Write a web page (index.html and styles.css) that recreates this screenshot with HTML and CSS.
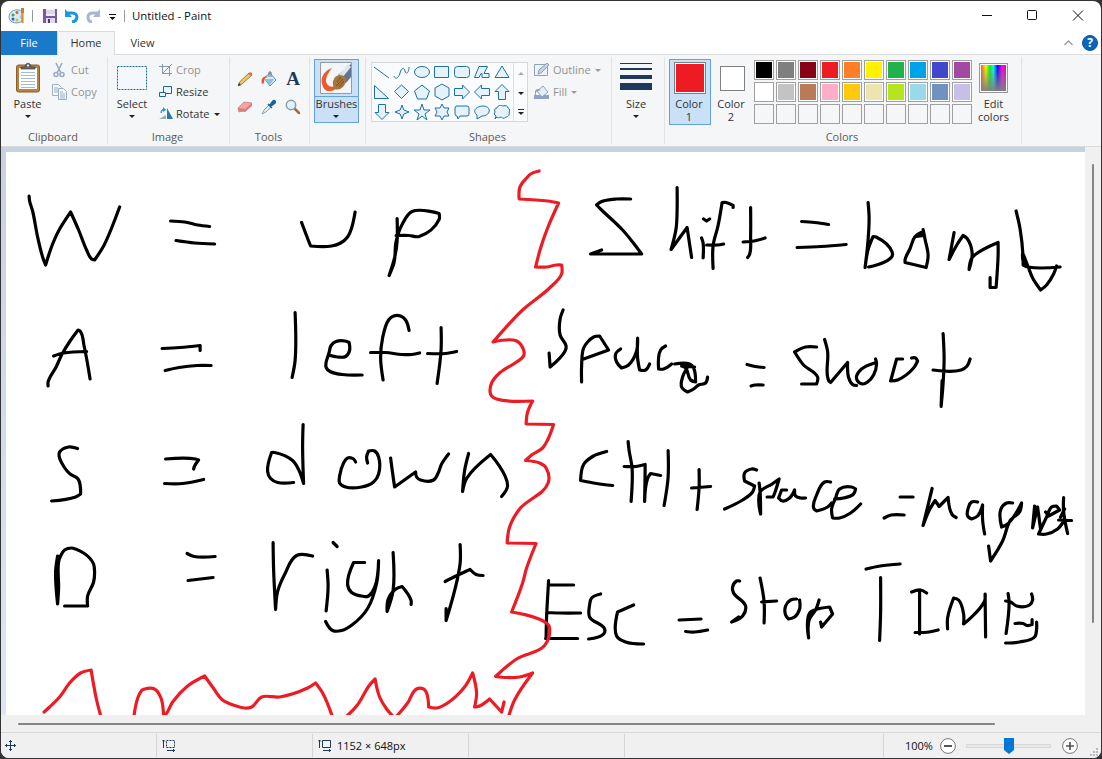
FILE: index.html
```
<!DOCTYPE html>
<html lang="en">
<head>
<meta charset="utf-8">
<title>Untitled - Paint</title>
<link rel="stylesheet" href="styles.css">
</head>
<body>
<div class="window">
  <header class="titlebar">
    <svg class="app-icon" width="18" height="18" viewBox="0 0 18 18"><path d="M1 10C1 5 6 2 11 3c4 1 4 4 2 6-1 2 2 3 1 5-2 3-13 3-13-4z" fill="#d6eaf7" stroke="#5f9fc8"/><circle cx="5" cy="8" r="1.5" fill="#3cab45"/><circle cx="9" cy="5.500" r="1.500" fill="#e4572c"/><circle cx="5" cy="12" r="1.500" fill="#2a62bd"/><circle cx="9" cy="13" r="1.500" fill="#e8b820"/><path d="M14.500 6v10" stroke="#e58a2e" stroke-width="2.200"/><path d="M13 6V1l3 0v5z" fill="#ce7a35"/></svg>
    <i class="bar"></i>
    <svg class="save" width="14" height="14" viewBox="0 0 14 14"><path d="M0 0h14v14H0z" fill="#7759a7"/><path d="M3 0h9v7H3z" fill="#f1edf8"/><path d="M3 2h9M3 4h9" stroke="#c9bddf"/><path d="M3 9h9v5H3z" fill="#dcdce9"/><path d="M5 10h2v4H5z" fill="#50347f"/></svg>
    <svg class="undo" width="14" height="14" viewBox="0 0 14 14"><path d="M2 4h5c7 0 6 8 0 9" fill="none" stroke="#1598df" stroke-width="3"/><path d="M0 0v8h7z" fill="#1598df"/></svg>
    <svg class="redo" width="14" height="14" viewBox="0 0 14 14"><path d="M12 4H7C0 4 1 12 6 13" fill="none" stroke="#a9b7c8" stroke-width="3"/><path d="M14 0v8H7z" fill="#a9b7c8"/></svg>
    <svg class="custom" width="7" height="6" viewBox="0 0 7 6"><path d="M0 .5h7" stroke="#111"/><path d="M.5 3h6l-3 3z" fill="#111"/></svg>
    <i class="bar"></i>
    <span class="title">Untitled - Paint</span>
    <svg class="controls" width="104" height="12" viewBox="0 0 104 12" fill="none" stroke="#111"><path d="M0 5.500h10" /><rect x="45.500" y=".5" width="9" height="9" rx="1"/><path d="m91 .5 10 10m0-10-10 10"/></svg>
  </header>
  <nav class="tabs">
    <span class="tab file">File</span><span class="tab home">Home</span><span class="tab view">View</span>
    <svg class="collapse" width="9" height="6" viewBox="0 0 9 6"><path d="m.5 5 4-4 4 4" fill="none" stroke="#999" stroke-width="1.300"/></svg>
    <span class="help">?</span>
  </nav>

  <section class="ribbon">
    <div class="group clipboard">
      <div class="body">
        <div class="big paste">
          <svg width="26" height="33" viewBox="0 0 26 33"><rect x="1.500" y="3" width="23" height="27" rx="2" fill="#b88342" stroke="#8d5d28"/><path d="M4 6h18v21H4z" fill="#fff"/><path d="M6 10.500h14M6 13.500h14M6 16.500h14M6 19.500h14M6 22.500h14M6 25.500h14" stroke="#9fbbd6"/><path d="M6 7V5h4c0-5 6-5 6 0h4v2z" fill="#666" stroke="#444" stroke-width=".7"/><circle cx="13" cy="3.500" r="1" fill="#fff"/></svg>
          <span>Paste</span><i class="arrow"></i>
        </div>
        <div class="rows disabled">
          <div class="row"><svg width="16" height="16" viewBox="0 0 16 16" fill="none" stroke="#9aabc0" stroke-width="1.600"><path d="m4 1 5 10M10 1 5 11"/><circle cx="4" cy="12.500" r="2"/><circle cx="10" cy="12.500" r="2"/></svg>Cut</div>
          <div class="row"><svg width="16" height="16" viewBox="0 0 16 16" fill="#f4f7fb" stroke="#9fb0c5"><path d="M.5.5h6l3 3v8h-9z"/><path d="M2 4h4M2 6h4M2 8h4"/><path d="M6.500 4.500h5l3 3v8h-8z"/><path d="M8 8h3M8 10h5M8 12h5M8 14h5"/></svg>Copy</div>
        </div>
      </div>
      <h2>Clipboard</h2>
    </div>

    <div class="group image">
      <div class="body">
        <div class="big select">
          <svg width="30" height="33" viewBox="0 0 30 33"><rect x=".5" y="4.500" width="29" height="23" fill="#f4f8fc" stroke="#1e6fae" stroke-dasharray="2 1"/></svg>
          <span>Select</span><i class="arrow"></i>
        </div>
        <div class="rows">
          <div class="row off"><svg width="14" height="16" viewBox="0 0 14 16" fill="none" stroke="#8496ae"><path d="M3.500 2v9.500H13M0 4.500h10.500V14M3 12 13 2"/></svg>Crop</div>
          <div class="row"><svg width="14" height="16" viewBox="0 0 14 16" fill="#eaf6fc" stroke="#1c669f"><path d="M4.500 2.500h8v7h-8z"/><path d="M.5 8.500h6v4h-6z"/></svg>Resize</div>
          <div class="row"><svg width="14" height="16" viewBox="0 0 14 16"><path d="M8 2v11h6z" fill="#2479b6"/><path d="M7 9v4H0z" fill="#aaa"/><path d="M2 7c0-4 4-4 4-3" fill="none" stroke="#2b91dd" stroke-width="1.300"/><path d="m4 1 3 3-3 2z" fill="#2b91dd"/></svg>Rotate<i class="arrow side"></i></div>
        </div>
      </div>
      <h2>Image</h2>
    </div>

    <div class="group tools">
      <div class="body tool-grid">
        <svg viewBox="0 0 16 16"><path d="m1 15 1.500-4L12 2l3 2-10 9z" fill="#f0c65a" stroke="#8d6c2c" stroke-width=".8"/><path d="m1 15 1-3 2 2z" fill="#333"/><path d="m11 3 2-2 2 1v2l-1 1z" fill="#d8705c"/></svg>
        <svg viewBox="0 0 16 16"><path d="m3 7 6-5 6 7-6 6z" fill="#d8ebf8" stroke="#5d8fb5"/><path d="m4 8 9 0-4 6z" fill="#8dbfe0"/><path d="M1 13C-1 7 3 4 8 6 4 6 3 8 3 12z" fill="#e5542b"/><path d="M8 6V1h2v5" fill="none" stroke="#65778a"/></svg>
        <span class="letter">A</span>
        <svg viewBox="0 0 16 16"><path d="m1 9 6-6 8 1-6 7-7 2z" fill="#f2a5a2" stroke="#c46d70" stroke-width=".7"/><path d="m1 9 7 1 7-6v3l-7 6-6-1z" fill="#dd7b7c"/></svg>
        <svg viewBox="0 0 16 16"><path d="m1 15 2-4 5-5 2 2-5 5z" fill="#dbeef8" stroke="#718da5" stroke-width=".8"/><path d="m7 5 4 4M9 6l3-4c1-1 3 0 2 2l-4 3z" fill="#1862a4" stroke="#1862a4" stroke-width="1.600"/></svg>
        <svg viewBox="0 0 16 16"><path d="m9 9 5 5" stroke="#a76b38" stroke-width="2.500" stroke-linecap="round"/><circle cx="6" cy="6" r="4.700" fill="#dff1fc" stroke="#8b9aa8" stroke-width="1.500"/></svg>
      </div>
      <h2>Tools</h2>
    </div>

    <div class="group brushes">
      <div class="brush-button">
        <svg width="32" height="32" viewBox="0 0 32 32"><path d="M.5.5h31v31H.5z" fill="#f2f6f8" stroke="#949a9f"/><path d="M12 6C4 9-1 16 3 25c3 6 9 5 14 1l-2-2c-5 2-9-1-9-6 0-4 3-8 6-12z" fill="#ed5928"/><path d="M31 2v13l-5 6-8-8z" fill="#61748b"/><path d="m28 2-9 11 3 3 9-11z" fill="#dce6ef"/><path d="M20 13c5 0 8 4 5 9-3 6-8 6-12 5 2-3-2-5 1-10 1-3 4-4 6-4z" fill="#a8743e"/><path d="m17 20 4-5m-5 9 7-7m-4 8 5-6" stroke="#6c451f" stroke-width=".8"/></svg>
        <div>Brushes<i class="arrow"></i></div>
      </div>
    </div>

    <div class="group shapes">
      <div class="body">
        <div class="gallery">
          <div class="shape-grid">
            <svg viewBox="0 0 20 20"><path d="m2 5 15 11"/></svg>
            <svg viewBox="0 0 20 20"><path d="M2 14c1 4 5 2 6-3s4-6 5-2 4 2 4-4" fill="none"/></svg>
            <svg viewBox="0 0 20 20"><ellipse cx="10" cy="10" rx="7.500" ry="5.500"/></svg>
            <svg viewBox="0 0 20 20"><path d="M2.500 4.500h14v11h-14z"/></svg>
            <svg viewBox="0 0 20 20"><rect x="2.500" y="4.500" width="15" height="11" rx="3"/></svg>
            <svg viewBox="0 0 20 20"><path d="M2.500 15.500 7 4.500h8.500l-3.500 7h5l0 4h-7v-4H9l-2 4z"/></svg>
            <svg viewBox="0 0 20 20"><path d="m10 4 7 11.500H3z"/></svg>
            <svg viewBox="0 0 20 20"><path d="M2.500 3.500v13h14z"/></svg>
            <svg viewBox="0 0 20 20"><path d="m9.500 3 7 6.500-7 7-7-7z"/></svg>
            <svg viewBox="0 0 20 20"><path d="m10 3 7.500 6-3 8h-9l-3-8z"/></svg>
            <svg viewBox="0 0 20 20"><path d="m10 2 7 4v8l-7 4-7-4V6z"/></svg>
            <svg viewBox="0 0 20 20"><path d="M2.500 6.500h8V3l7 7-7 7v-3.500h-8z"/></svg>
            <svg viewBox="0 0 20 20"><path d="M17.500 6.500h-8V3l-7 7 7 7v-3.500h8z"/></svg>
            <svg viewBox="0 0 20 20"><path d="M6.500 17.500v-8H3l7-7 7 7h-3.500v8z"/></svg>
            <svg viewBox="0 0 20 20"><path d="M6.500 2.500v8H3l7 7 7-7h-3.500v-8z"/></svg>
            <svg viewBox="0 0 20 20"><path d="m10 3 1.800 5L17 10l-5.200 2-1.800 5-1.800-5L3 10l5.200-2z"/></svg>
            <svg viewBox="0 0 20 20"><path d="m10 2 2 6h6l-5 4 2 6-5-4-5 4 2-6-5-4h6z"/></svg>
            <svg viewBox="0 0 20 20"><path d="m10 2 2 4h5l-2 4 2 4h-5l-2 4-2-4H3l2-4-2-4h5z"/></svg>
            <svg viewBox="0 0 20 20"><path d="M5 4h10q2 0 2 2v6q0 2-2 2H8l-2 3-1-3q-2 0-2-2V6q0-2 2-2z"/></svg>
            <svg viewBox="0 0 20 20"><path d="M5 13C-1 8 6 4 11 4c9 0 8 10-1 10l-5 3z"/></svg>
            <svg viewBox="0 0 20 20"><path d="M4 14c-2-1-2-3-1-4-1-3 0-4 2-4 1-3 4-3 6-2 3-1 5 0 5 2 2 1 2 3 1 4 1 3-1 5-3 5-2 2-4 1-5 0-2 1-3 1-4 0l-2 2z"/></svg>
          </div>
          <div class="spin"><span><i class="arrow up"></i></span><span><i class="arrow"></i></span><span><i class="arrow more"></i></span></div>
        </div>
        <div class="rows disabled fills">
          <div class="row"><svg width="17" height="16" viewBox="0 0 17 16" fill="#edf2f8" stroke="#8ea2bd"><path d="M1.500 2.500h13v11h-13z"/><path d="m5 12 1-4 8-7 2 2-8 8z" fill="#c5d3e4"/></svg>Outline<i class="arrow side"></i></div>
          <div class="row"><svg width="17" height="16" viewBox="0 0 17 16"><path d="M1 11h15v4H1z" fill="#8ea4c2"/><path d="m4 7 6-5 5 6-6 5z" fill="#e5edf6" stroke="#8ea4c2"/><path d="M2 11V7c1-2 3-3 6-1L3 8v3z" fill="#8ea4c2"/></svg>Fill<i class="arrow side"></i></div>
        </div>
      </div>
      <h2>Shapes</h2>
    </div>

    <div class="group size">
      <div class="big">
        <svg width="32" height="33" viewBox="0 0 32 33" fill="#1e395b"><path d="M0 1h32v1H0zM0 6h32v2H0zM0 13h32v4H0zM0 21h32v7H0z"/></svg>
        <span>Size</span><i class="arrow"></i>
      </div>
    </div>

    <div class="group colors">
      <div class="body">
        <div class="color-button active"><i class="current red"></i><span>Color<br>1</span></div>
        <div class="color-button second"><i class="current white"></i><span>Color<br>2</span></div>
        <div class="palette">
          <i class="c1"></i><i class="c2"></i><i class="c3"></i><i class="c4"></i><i class="c5"></i><i class="c6"></i><i class="c7"></i><i class="c8"></i><i class="c9"></i><i class="c10"></i>
          <i class="c11"></i><i class="c12"></i><i class="c13"></i><i class="c14"></i><i class="c15"></i><i class="c16"></i><i class="c17"></i><i class="c18"></i><i class="c19"></i><i class="c20"></i>
          <i></i><i></i><i></i><i></i><i></i><i></i><i></i><i></i><i></i><i></i>
        </div>
        <div class="edit"><i class="spectrum"></i><span>Edit<br>colors</span></div>
      </div>
      <h2>Colors</h2>
    </div>
  </section>

  <main class="workspace">
    <div class="canvas-area">
      <svg class="canvas" width="1079" height="563" viewBox="6.4 152 1079 563">
        <g class="ink">
          <path d="M29.500 196 30 201 33 211 38 237 43 257 46 265 53 244 60 229 71 212 79 230 87 250 92 259 95 260 104 246 112 228 120 207M171 221l14 1 13 3 12 1.500M176.500 240.500 195 243l20 1"/>
          <path d="M48.500 386v-4l8-15 6-13 8-13 8-11 2 1 4 15 6 33M54 356l10-3 23-1.500M162.500 348.500l18-1 20-2v5M165.500 370.500l14-3 18-2h14"/>
          <path d="M302 222.500 309 241l2 5h21l9-3 7-6 4-9 3.500-16M397.500 218.500v23l-2 14-6 20 5-13 2-21 6-17 10-13 27 2v6l-20 17-10-1h-13"/>
          <path d="M295.500 312.500v48l-3 17M329 355l9 2 8-.5 4-6-.5-8-4-1.500-9 .5-5 4-2 7-3 15 4 4 12 3 20 .5M409.500 330.500 406 320l-5-4h-7l-5 4-6 18-2 20 2.500 22M371 352.500h15l16 2h10l8-1.500M441.500 327.500v22l-4 34M428 353.500h18l11-2"/>
          <path d="M78 448.500 69 447l-9 5-.5 4 5 11 6 7 8 5 2.500 15-5 3-24 4M166 459h30l3 1-4 6-1 3M165 483.500h18l21-4"/>
          <path d="M303.500 424.500l-.5 22 1 37-5-14-6-9-18-8h-3l-4 19 3 7 7 4h16M356 462l-2-3-6-1-4 5-4 13v7l6 4h16l12-5 5-8v-17l-4-6h-6l-2 6 1 6M391 458l2 15 2 14 21-15 1 5 4 3h13l5-8 3-8 7-10M469 453.500l-4 17-2 21 4-13 24-24 17 31-6 11"/>
          <path d="M58 556l-2 16 2 32 1-16v-26l2-6 4-6 7-2 4 1 8 4 6 5 4 6 1 8-1 10-6 14v10H65M187.500 553.500l7 3h21M188.500 580.500l25-3"/>
          <path d="M273.500 542.500l.5 27 2 40 2-18 7-17 12-19 16 .5M327.500 570l1 17-2 24M333.500 542.500l4 4M365 562.500h-11l-6 22 4 8 13 4h3l7-9 4-27-2 23-9 25-15 16-11 6h-9l-7-9M393.500 552.500v38l-6 21 1-12 7-10 7-3 9 14v4M460.500 544.500v19l-14 57v-12M445.500 581.500l12-6 13-6 6 5 7 1"/>
          <path d="M631 199h-14l-16 3-4 3 5 5 21 20 10 12 9 12h-51l11-4M677.500 187.500v23l-1 18-5 21 16-22 4.500 30M702 238l1.500 5v15M704 219l3 2 3-2M733.500 207.500v-2l-7-3h-4l-4 23-5 20v23M707 245h11l6-1M751 207.500v28l-1 19-2 3M743.500 242l11-1 11-3M802 221.500l13 1 14 2M797.500 247.500l24-1 25-2"/>
          <path d="M868.500 202.500l1 15-1 22-3 28 3-18 5-13 3 .5 16 15-.5 5-23 10M923.500 229.500l2 10 3 16-2 12-21-5v-3l5-11 5-12 6-4 3 3-8 1M954.500 232.500l-5 27 8-15 6-9 4 3 5 14-3 17 2-10 3-4 24-13v13l-2 32h-6v-10M1016.500 211l4 18 3 28v8l5 2h32M1023 253l1 10 3 3M1024 255l5 13 4 10 8 12 6-5 7-11 3-8"/>
          <path d="M563.500 310l-3 9v16l6 11-1 5-15 16-1-14M582 382v-16l2-18 4-6 6-5 6-1 9 14-25 9M621 349l-5 5 1 8 5 6 7-3 8-14 1-13v20l2 12h6l4-6M666 346l-5 4-2 19h5l8-5M675 364h15l4 4 2 14-5-2-5-12-4-2 6 1-5 10-1 10 6 5 6-3 5-4 7-2 2-6M682 366l13 1"/>
          <path d="M747.500 364.500l8 2 9 1M751.500 386l4-1h8M817 347h-11l-11 5 9 13 14 12-1 7h-15M825 339.500l3 12 1 29 2 2 17-20 1 15 4 7 4 1M876 359l1 5-3 11-6 7-5 2-5-3-1-5 5-7 13-6M903 359h-6l-6 22 7-1 16-12 4-7-2-3h-4M943.500 333.500l1 25-1 25-2 23 1-26M933.500 370h28l6-4 3-7"/>
          <path d="M607 451.500l-14 5-9 8-3 16 16 3 16 2M628.500 441.500l1 9 3 18-1 33M624.500 466.500h12l9-2v8l-.5 29 3-23 3-5 10 2M668.500 450.500v27l-4 28M699.500 469.500v18l-2 22M692 488l19-1.500"/>
          <path d="M757 470l-5-1-7 4v8l10 5-2 6-10 8-18 9M759.500 483l1 9 .5 22-.5-22 12-8 7-5-4 13-2 5h-6M787 490h-5l-3 8 4 3 7-3 5-8 1 6 5 2h5M831 482h-6l-8 13-3 13 3 3 11-4 4-4M835 499l9-1 10-4 2-5-4-2-12 2-4 9-4 11 1 9h7l11-5 10-9"/>
          <path d="M900.500 497h13M884.500 518l7-3h13M932.500 488.500l-9 37 6-15 6-10 4 6 9-9 4 17 4 3M978 502h-6l-3 5-1 9 4 3 6-3 5-11v15l2 14M1013 503h-6l-6 7 1 17 6-3 14-21-2 9-9 8-8 21-12 20-2-15M1035 506l-2 22 5-21 3 22-1-7M1046 512l3 4 11-6-3-4-5 1-5 10-8 17h8l11-5 5-6M1064 497.500v14l4 22M1059 520l13 .5M1061 517l4-8"/>
          <path d="M549 580.500l-1 17-1 19-.5 21M550 585h24M548 612.500l12 .5h21M546 638.500h32M601 594l-9 4-2 7v12l15 12-1 5-15 5M634 605l-16 7-1 24 9 6 18 2M679.500 620l22-1M686 631.500l9 .5 13-2M740 581h-3l-4 6 1 6 12 13-3 10-11 6 7-5M760.500 578l4 24v21M762 602l15-1M797 599l-6 1-5 6v9l3 4 6-2 5-8v-9M819.500 600l-3 9-7 11-.5 18 1-25 5-3 15-3 3 7-11 13-1-5"/>
          <path d="M866.500 569l14-3 20-2M881 577.500v35l-1 28M912 592l9-2 6 3M920 592v42M915.500 632.500l14-.5 9-2M948 629v-11l6-20 5 2 5 14v10l21-23 .5-7 .5 43M1008.500 593.500l1 9-3 31M1006 601l5 1 6 4 13-1 3-5-1-6M1015.500 623.500h8l4 2 5-1v-5M1006 643l14-1 15-5 2-8v-7"/>
        </g>
        <g class="divider">
          <path d="M539.500 171L531 174 527 178 522 184 520 188 519.500 199 548 201 559 203 548 228 541 248 536 267 547 267 557 265 562 265 562 274 550 288 523 310 493.500 342 517 341 524 350 524 356 517 362 500 373 492 383 490.500 392 492 396 497 399 533 401 528 412 526.500 424 554 424.500 548 440 543 448 532 455 526 460.500 540 463 546.500 468 548.500 483 520 509 510 527 507.500 543 536.500 543.500 527 568 523 583 512 612 548 624 550 628 545 645.500 517 659 496 676.500 507 677.500 520 677 533 673 515 700 508 720"/>
          <path d="M44.500 712L50 707 60 697 70 683 81 673 91.500 670 97 700 102 719M134 720L142 690.500 145 689 155 689 160 695 162.500 702 164 716 166.500 714 173 702 188 686 205 676 213 687 223 700 235 705.500 245 708 252 707 262 697 280 697 308 688 316 683 323 693 334 720M345 718L357 706 370 685 375.500 679 380 697 387 709 395 718 399 714 408 703 417 689 424 689 427 693 429 707 437 708 448 703 465 687 473 673 477 693 475 707 480 706 490 699 502 712 504.500 702"/>
        </g>
      </svg>
    </div>
    <div class="vscroll"><i></i></div>
    <div class="hscroll"><i></i></div>
  </main>
  <footer class="status">
    <div class="cursor"><svg width="12" height="12" viewBox="0 0 12 12" fill="none" stroke="#1e395b"><path d="M5.500 0v11M0 5.500h11M4 2l1.500-1.500L7 2M4 9l1.500 1.500L7 9M2 4 .5 5.500 2 7M9 4l1.500 1.500L9 7"/></svg></div>
    <div><svg width="14" height="13" viewBox="0 0 14 13" fill="none" stroke="#1e395b"><path d="M4.500 1.500h8v7h-8z" stroke-dasharray="2 1"/><path d="M1.500 9V1M0 2.500 1.500 1 3 2.500M5 11.500h8M11 10l1.500 1.500L11 13"/></svg></div>
    <div><svg width="14" height="13" viewBox="0 0 14 13" fill="#edf7fd" stroke="#1e395b"><path d="M4.500 1.500h8v7h-8z"/><path d="M1.500 9V1M0 2.500 1.500 1 3 2.500M5 11.500h8M11 10l1.500 1.500L11 13" fill="none"/></svg><span>1152 × 648px</span></div>
    <div></div>
    <div class="wide"></div>
    <div class="zoom">
      <span>100%</span>
      <svg width="16" height="16" viewBox="0 0 16 16"><circle cx="8" cy="8" r="7.400" fill="#fff" stroke="#777"/><path d="M4 8h8" stroke="#555" stroke-width="2"/></svg>
      <svg class="slider" width="86" height="18" viewBox="0 0 86 18"><path d="M.5 7.500h84v3H.5z" fill="#e7eaea" stroke="#d6d6d6"/><path d="M38 1h10v12l-5 4-5-4z" fill="#0078d7"/></svg>
      <svg width="16" height="16" viewBox="0 0 16 16"><circle cx="8" cy="8" r="7.400" fill="#fff" stroke="#777"/><path d="M4 8h8M8 4v8" stroke="#555" stroke-width="1.700"/></svg>
      <svg class="grip" width="9" height="9" viewBox="0 0 9 9" fill="#bbb"><path d="M6 0h2v2H6zM3 3h2v2H3zM6 3h2v2H6zM0 6h2v2H0zM3 6h2v2H3zM6 6h2v2H6z"/></svg>
    </div>
  </footer>
</div>
<script src="ink.js"></script>
</body>
</html>
```
FILE: ink.js
```
// Rounds the gentle bends of each brush stroke and keeps its sharp corners.
function readStrokes(d) {
  const tokens = d.match(/[a-zA-Z]|-?\d*\.?\d+/g);
  const strokes = [];
  let i = 0, cmd = 'M', x = 0, y = 0, current;
  const next = () => parseFloat(tokens[i++]);
  while (i < tokens.length) {
    if (/[a-zA-Z]/.test(tokens[i])) cmd = tokens[i++];
    const rel = cmd === cmd.toLowerCase();
    switch (cmd.toUpperCase()) {
      case 'M':
        x = next(); y = next();
        current = [];
        strokes.push(current);
        cmd = 'L';
        break;
      case 'H': { const v = next(); x = rel ? x + v : v; break; }
      case 'V': { const v = next(); y = rel ? y + v : v; break; }
      default: { const a = next(), b = next(); x = rel ? x + a : a; y = rel ? y + b : b; }
    }
    current.push([x, y]);
  }
  return strokes;
}

function tangent(p, k) {
  const a = p[k - 1], b = p[k], c = p[k + 1];
  if (!a || !c) return [0, 0];
  const u = [b[0] - a[0], b[1] - a[1]], v = [c[0] - b[0], c[1] - b[1]];
  const lu = Math.hypot(...u), lv = Math.hypot(...v);
  if (!lu || !lv) return [0, 0];
  const cos = (u[0] * v[0] + u[1] * v[1]) / (lu * lv);
  if (cos < 0.45) return [0, 0];
  const t = [u[0] / lu + v[0] / lv, u[1] / lu + v[1] / lv];
  const lt = Math.hypot(...t);
  return [t[0] / lt, t[1] / lt];
}

function smooth(p) {
  let d = `M${p[0]}`;
  for (let k = 0; k < p.length - 1; k++) {
    const a = p[k], b = p[k + 1];
    const len = Math.hypot(b[0] - a[0], b[1] - a[1]) / 3;
    const s = tangent(p, k), e = tangent(p, k + 1);
    d += `C${a[0] + s[0] * len},${a[1] + s[1] * len} ${b[0] - e[0] * len},${b[1] - e[1] * len} ${b}`;
  }
  return d;
}

document.querySelectorAll('.canvas path').forEach(path => {
  path.setAttribute('d', readStrokes(path.getAttribute('d')).map(smooth).join(''));
});
```
FILE: styles.css
```
* { box-sizing: border-box; }
body { margin: 0; width: 1102px; height: 759px; padding: 1px; overflow: hidden; background: #333335; color: #333; font: 11px/14px "Open Sans", "Noto Sans", sans-serif; }
svg { display: block; flex: none; }
i { display: block; flex: none; }
.window { width: 1100px; height: 757px; overflow: hidden; border-radius: 8px; background: #fff; display: flex; flex-direction: column; }

.titlebar { height: 30px; flex: none; display: flex; align-items: center; padding: 0 15px 0 7px; color: #111; }
.bar { width: 1px; height: 12px; background: #999; margin-left: 6px; }
.save { margin-left: 10px; }
.undo { margin-left: 8px; }
.redo { margin-left: 7px; }
.custom { margin: 2px 2px 0 9px; }
.title { margin-left: 7px; font-size: 11.4px; }
.controls { margin-left: auto; }

.tabs { height: 24px; flex: none; display: flex; align-items: center; border-bottom: 1px solid #dadbdc; padding-right: 3px; }
.tab { height: 24px; line-height: 23px; text-align: center; margin-bottom: -1px; }
.file { width: 56px; background: #1979ca; color: #fff; }
.home { width: 58px; border: 1px solid #dadbdc; border-bottom: 0; background: #f5f6f7; line-height: 22px; }
.view { width: 55px; }
.collapse { margin: 0 14px 0 auto; transform: translateX(5px); }
.help { width: 16px; height: 16px; border-radius: 50%; background: #0865bd; border: 1px solid #0755a3; color: #fff; text-align: center; font-size: 12px; font-weight: 700; line-height: 14px; }

.ribbon { height: 92px; flex: none; display: flex; background: #f5f6f7; border-bottom: 1px solid #dadbdc; padding-top: 2px; }
.group { height: 87px; padding-top: 2px; border-right: 1px solid #e2e3e4; display: flex; flex-direction: column; }
.clipboard { width: 107px; }
.image { width: 122px; }
.tools { width: 80px; }
.brushes { width: 56px; }
.shapes { width: 246px; }
.size { width: 53px; }
.colors { width: 357px; }
.body { height: 71px; display: flex; flex: none; }
.group h2 { margin: 0; padding-right: 2px; font: inherit; color: #5a5a5a; text-align: center; }
.arrow { width: 0; height: 0; border: 3px solid transparent; border-top-color: #222; border-bottom: 0; }
.big { display: flex; flex-direction: column; align-items: center; padding-top: 3px; }
.big span { margin-top: 2px; }
.big .arrow { margin-top: 4px; }
.paste { width: 53px; }
.rows { display: flex; flex-direction: column; }
.row { display: flex; align-items: center; height: 22px; gap: 3px; white-space: nowrap; }
.row .side { margin-left: 1px; }
.clipboard .rows { margin-left: -2px; }
.disabled, .off { color: #929292; }
.disabled .arrow { border-top-color: #999; }
.select { width: 48px; }
.image .rows { padding-left: 3px; }
.tool-grid { display: grid; grid-template-columns: repeat(3, 24px); grid-auto-rows: 28px; place-items: center; padding: 6px 0 0 3px; }
.tool-grid svg { width: 16px; height: 16px; }
.letter { color: #1e395b; font: bold 19px/20px "Liberation Serif", serif; }
.brushes { padding-left: 4px; }
.brush-button { width: 45px; height: 64px; background: #c9e0f7; border: 1px solid #62a2e4; }
.brush-button > svg { margin: 2px auto 0 5px; }
.brush-button div { height: 27px; margin-top: 2px; border-top: 1px solid #62a2e4; text-align: center; }
.brush-button .arrow { margin: 4px 0 0 18px; }
.shapes .body { padding: 3px 0 0 5px; }
.gallery { display: flex; width: 157px; height: 60px; border: 1px solid #d6d8da; background: #fafbfc; }
.shape-grid { display: grid; grid-template-columns: repeat(7, 20px); grid-auto-rows: 20px; width: 141px; margin-top: -1px; }
.shape-grid svg { width: 20px; height: 20px; fill: #e5f2f8; stroke: #1e6fae; stroke-width: 1; }
.spin { width: 14px; border-left: 1px solid #dedfe1; }
.spin span { height: 20px; display: flex; align-items: center; justify-content: center; }
.spin .up { border: 3px solid transparent; border-bottom-color: #aaa; border-top: 0; }
.spin .more { position: relative; }
.spin .more::before { content: ""; position: absolute; width: 6px; height: 1px; background: #333; top: -6px; left: -3px; }
.fills { padding-left: 5px; margin-top: -3px; }
.size .big { width: 48px; }
.colors > .body { padding-left: 4px; }
.color-button { width: 42px; height: 66px; border: 1px solid transparent; text-align: center; line-height: 13px; flex: none; }
.color-button span, .edit span { display: block; }
.color-button span { margin-right: 2px; }
.active { border-color: #62a2e4; background: #c9e0f7; }
.current { width: 32px; height: 32px; border: 1px solid #808080; box-shadow: inset 0 0 0 1px #fff; margin: 2px auto 3px; }
.white { width: 25px; height: 25px; background: #fff; margin: 6px auto 6px 8px; }
.red { background: #ed1c24; }
.palette { display: grid; grid-template-columns: repeat(10, 20px); grid-auto-rows: 20px; gap: 2px; margin: 1px 0 0 1px; }
.palette i { border: 1px solid #a0a0a0; }
.palette i:nth-child(-n+20) { box-shadow: inset 0 0 0 1px #fff; }
.edit { width: 43px; text-align: center; line-height: 13px; }
.spectrum { width: 29px; height: 30px; margin: 4px auto 4px; border: 1px solid #969696; box-shadow: inset 0 0 0 1px #fff; background: linear-gradient(to bottom, transparent, #808080), linear-gradient(to right, #f33, #ff0 22%, #0f0 36%, #0ff 50%, #00f 65%, #f0f 82%, #f03); }
.c1 { background: #000; }
.c2 { background: #7f7f7f; }
.c3 { background: #880015; }
.c4 { background: #ed1c24; }
.c5 { background: #ff7f27; }
.c6 { background: #fff200; }
.c7 { background: #22b14c; }
.c8 { background: #00a2e8; }
.c9 { background: #3f48cc; }
.c10 { background: #a349a4; }
.c11 { background: #fff; }
.c12 { background: #c3c3c3; }
.c13 { background: #b97a57; }
.c14 { background: #ffaec9; }
.c15 { background: #ffc90e; }
.c16 { background: #efe4b0; }
.c17 { background: #b5e61d; }
.c18 { background: #99d9ea; }
.c19 { background: #7092be; }
.c20 { background: #c8bfe7; }

.workspace { height: 585px; flex: none; display: grid; grid-template-columns: 1084px 16px; grid-template-rows: 568px 17px; background: #f0f0f0; }
.canvas-area { background: linear-gradient(#c8d1e2, #dce6f4); padding: 5px 0 0 5px; }
.canvas { background: #fff; }
.ink path, .divider path { fill: none; stroke: #000; stroke-width: 3.200; stroke-linecap: round; stroke-linejoin: round; }
.divider path { stroke: #ed1c24; }
.vscroll { padding: 17px 0 0 7px; }
.vscroll i { width: 2px; height: 459px; background: #858585; border-radius: 1px; }
.hscroll { padding: 8px 0 0 17px; }
.hscroll i { width: 977px; height: 2px; background: #858585; border-radius: 1px; }
.status { height: 26px; flex: none; background: #f0f0f0; border-top: 1px solid #d7d7d7; display: flex; color: #111; }
.status > div { width: 156px; height: 23px; margin-top: 1px; border-right: 1px solid #d5d5d5; padding-left: 5px; display: flex; align-items: center; gap: 5px; }
.status > .cursor { padding-left: 4px; }
.status > .wide { width: 259px; }
.status > .zoom { width: 217px; border: 0; padding-left: 21px; gap: 0; }
.zoom > span { width: 35px; }
.slider { margin: 0 10px 0 10px; }
.grip { margin: 14px 0 0 12px; }
```
